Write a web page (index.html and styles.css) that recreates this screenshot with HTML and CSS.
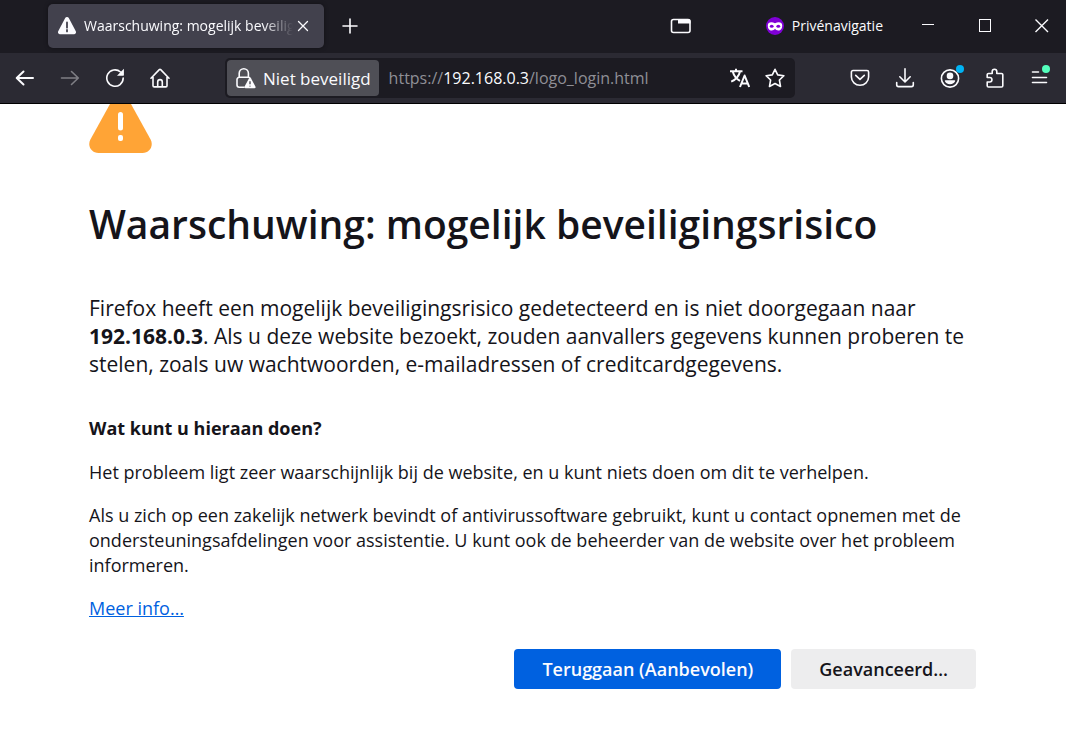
FILE: index.html
```html
<!DOCTYPE html>
<html lang="nl">
<head>
<meta charset="utf-8">
<title>Waarschuwing: mogelijk beveiligingsrisico</title>
<link rel="stylesheet" href="styles.css">
</head>
<body>
<header class="chrome">
  <div class="tabbar">
    <div class="tab">
      <svg class="icon" width="20" height="20" viewBox="0 0 20 20"><path d="M8.2 2.1a2 2 0 0 1 3.600 0l7 13.200a2 2 0 0 1-1.800 2.900H3a2 2 0 0 1-1.800-2.900z" fill="#fbfbfe"/><path d="M10 6.500v5.200M10 14v1.400" stroke="#42414d" stroke-width="1.800" stroke-linecap="round"/></svg>
      <span class="tab-title">Waarschuwing: mogelijk beveiligingsrisico</span>
      <button class="tab-close" aria-label="Tabblad sluiten"><svg class="icon" width="12" height="12" viewBox="0 0 12 12"><path d="M1.500 1.500l9 9M10.500 1.500l-9 9" class="line slim"/></svg></button>
    </div>
    <button class="new-tab" aria-label="Nieuw tabblad"><svg class="icon" width="16" height="16" viewBox="0 0 16 16"><path d="M8 1v14M1 8h14" class="line"/></svg></button>
    <button class="tool tab-view" aria-label="Vensters"><svg class="icon" width="22" height="16" viewBox="0 0 22 16"><rect x="1.500" y="1.500" width="18.500" height="13" rx="2" class="line"/><path d="M8 1h10.500a2 2 0 0 1 2 2v2.500H8z" fill="#fbfbfe"/></svg></button>
    <div class="private">
      <svg class="icon" width="18" height="18" viewBox="0 0 18 18"><circle cx="9" cy="9" r="9" fill="#8000d7"/><path d="M1.800 8.200c0-3 3.600-3.900 7.200-2 3.600-1.900 7.200-1 7.200 2 0 3.800-1.600 5.200-3.900 5.200-1.500 0-2.500-.7-3.300-1.700-.8 1-1.800 1.700-3.300 1.700-2.300 0-3.900-1.400-3.900-5.200z" fill="#fff"/><ellipse cx="5.700" cy="9.200" rx="1.900" ry="1.500" fill="#8000d7"/><ellipse cx="12.300" cy="9.200" rx="1.900" ry="1.500" fill="#8000d7"/></svg>
      <span>Privénavigatie</span>
    </div>
    <div class="window-controls">
      <button aria-label="Minimaliseren"><svg class="icon" width="14" height="14" viewBox="0 0 14 14"><path d="M1 5.500h12" class="thin"/></svg></button>
      <button aria-label="Maximaliseren"><svg class="icon" width="14" height="14" viewBox="0 0 14 14"><rect x="1.500" y=".5" width="11" height="12" class="thin"/></svg></button>
      <button aria-label="Sluiten"><svg class="icon" width="14" height="14" viewBox="0 0 14 14"><path d="M.5 .5l12.500 12.500M13 .5L.5 13" class="thin cross"/></svg></button>
    </div>
  </div>
  <nav class="toolbar">
    <div class="tools">
      <button class="tool" aria-label="Terug"><svg class="icon" width="20" height="20" viewBox="0 0 20 20"><path d="M18 10H2M8.500 3.500L1.700 10l6.800 6.500" class="line strong"/></svg></button>
      <button class="tool dim" aria-label="Vooruit"><svg class="icon" width="20" height="20" viewBox="0 0 20 20"><path d="M1.500 10h16M11.500 3.500l6.800 6.500-6.800 6.500" class="line"/></svg></button>
      <button class="tool" aria-label="Vernieuwen"><svg class="icon" width="20" height="20" viewBox="0 0 20 20"><path d="M15.500 4A8.200 8.200 0 1 0 18.200 10" class="line"/><path d="M18.900 .8v6.300a.6.600 0 0 1-.6.600H12z" fill="#fbfbfe"/></svg></button>
      <button class="tool" aria-label="Startpagina"><svg class="icon" width="20" height="20" viewBox="0 0 20 20"><path d="M1 10.200l8.300-8.600a1 1 0 0 1 1.400 0l8.300 8.600M3 9v8.700a1.200 1.200 0 0 0 1.200 1.200h11.600a1.200 1.200 0 0 0 1.200-1.200V9M7.700 18.500v-4.600a2.300 2.300 0 0 1 4.600 0v4.600" class="line"/></svg></button>
    </div>
    <div class="urlbar">
      <button class="identity">
        <svg class="icon" width="20" height="22" viewBox="0 0 20 22"><path d="M8 20.200H3.200a2.200 2.200 0 0 1-2.200-2.200v-5.500a2.200 2.200 0 0 1 2.200-2.200h9.200a2.200 2.200 0 0 1 2 1.500M3.200 10V6.300a4.600 4.600 0 0 1 9.200 0V10" class="line"/><path d="M12.900 11.600a1.200 1.200 0 0 1 2.200 0l4.300 7.900a1.200 1.200 0 0 1-1.100 1.700H9.700a1.200 1.200 0 0 1-1.100-1.700z" fill="#fbfbfe"/><path d="M14 14.300v3M14 18.800v.8" stroke="#4f4f56" stroke-width="1.400"/></svg>
        <span>Niet beveiligd</span>
      </button>
      <label class="address"><span>https://</span><input type="text" value="192.168.0.3" size="11" aria-label="Adres"><span>/logo_login.html</span></label>
      <button class="url-action" aria-label="Vertalen"><svg class="icon" width="20" height="20" viewBox="0 0 20 20"><path d="M0 3.300h12.500M6 .8v2.500M10 3.500C9 8 6 11.500 1.200 13.700M2.900 4C4 8 6.500 11 10 12.800" class="bold"/><path d="M10 19l4.600-11.500L19.200 19M11.500 15.500h6.200" class="bold"/></svg></button>
      <button class="url-action" aria-label="Bladwijzer"><svg class="icon" width="20" height="20" viewBox="0 0 20 20"><path d="M10 1.300l2.700 5.600 6.200.8-4.500 4.300 1.100 6.500-5.500-3-5.500 3 1.100-6.500L1.100 7.700l6.200-.8z" class="line"/></svg></button>
    </div>
    <div class="tools">
      <button class="tool" aria-label="Pocket"><svg class="icon" width="20" height="20" viewBox="0 0 20 20"><path d="M3 2.500h14a1.600 1.600 0 0 1 1.600 1.600V9A8.600 8.300 0 0 1 1.400 9V4.100A1.600 1.600 0 0 1 3 2.500zM5.700 7.300l4.300 4 4.300-4" class="line"/></svg></button>
      <button class="tool" aria-label="Downloads"><svg class="icon" width="20" height="20" viewBox="0 0 20 20"><path d="M10 .8v13M4.800 8.800l5.200 5.200 5.200-5.200M1.700 14.500v2.300a1.800 1.800 0 0 0 1.800 1.800h13a1.800 1.800 0 0 0 1.800-1.800v-2.300" class="line"/></svg></button>
      <button class="tool" aria-label="Account"><svg class="icon" width="20" height="20" viewBox="0 0 20 20"><circle cx="10" cy="10.500" r="8.600" class="line"/><circle cx="10" cy="7.900" r="3.300" fill="#fbfbfe"/><path d="M5.600 12.200h8.800a.8.800 0 0 1 .8.900c-.6 2-2.600 3.100-5.200 3.100s-4.600-1.100-5.200-3.100a.8.800 0 0 1 .8-.9z" fill="#fbfbfe"/></svg><span class="badge blue"></span></button>
      <button class="tool" aria-label="Extensies"><svg class="icon" width="20" height="20" viewBox="0 0 20 20"><path d="M2.200 9.500V6.800a1.300 1.300 0 0 1 1.300-1.300h3.700V3.600a2.300 2.300 0 0 1 4.600 0v1.900h4.700a1.300 1.300 0 0 1 1.300 1.300v10.900a1.300 1.300 0 0 1-1.300 1.300h-13a1.300 1.300 0 0 1-1.300-1.300v-3.700h2.500a2.200 2.200 0 0 0 0-4.500z" class="line"/></svg></button>
      <button class="tool" aria-label="Menu"><svg class="icon" width="20" height="20" viewBox="0 0 20 20"><path d="M2.500 4h6M2.500 9.500h14M2.500 14.500h14" class="line"/></svg><span class="badge green"></span></button>
    </div>
  </nav>
</header>
<main class="page">
  <svg class="warning" width="63" height="49" viewBox="0 0 63 49"><path d="M21 0 1.400 35.500C-2 42 2.500 49 9.500 49h44c7 0 11.500-7 8.100-13.500L42 0z" fill="#ffa436"/><path d="M31.500 10.500v13.500" stroke="#fff" stroke-width="5" stroke-linecap="round"/><rect x="29" y="31" width="5" height="6" rx="2" fill="#fff"/></svg>
  <h1>Waarschuwing: mogelijk beveiligingsrisico</h1>
  <p class="lead">Firefox heeft een mogelijk beveiligingsrisico gedetecteerd en is niet doorgegaan naar <b>192.168.0.3</b>. Als u deze website bezoekt, zouden aanvallers gegevens kunnen proberen te stelen, zoals uw wachtwoorden, e-mailadressen of creditcardgegevens.</p>
  <h2>Wat kunt u hieraan doen?</h2>
  <p>Het probleem ligt zeer waarschijnlijk bij de website, en u kunt niets doen om dit te verhelpen.</p>
  <p>Als u zich op een zakelijk netwerk bevindt of antivirussoftware gebruikt, kunt u contact opnemen met de ondersteuningsafdelingen voor assistentie. U kunt ook de beheerder van de website over het probleem informeren.</p>
  <p><a href="#info">Meer info…</a></p>
  <div class="actions">
    <button class="btn primary">Teruggaan (Aanbevolen)</button>
    <button class="btn">Geavanceerd…</button>
  </div>
</main>
</body>
</html>
```
FILE: styles.css
```css
* { box-sizing: border-box; }
body {
  margin: 0;
  background: #fff;
  color: #15141a;
  font-family: "Open Sans", "Noto Sans", sans-serif;
  font-size: 18px;
  line-height: 25px;
}
button, input { font: inherit; color: inherit; margin: 0; padding: 0; border: 0; background: none; }
button { display: flex; align-items: center; justify-content: center; }
.icon { display: block; flex: none; }
.line, .thin, .bold { fill: none; stroke: #fbfbfe; stroke-width: 1.6; stroke-linecap: round; stroke-linejoin: round; }
.strong { stroke-width: 2; }
.slim { stroke-width: 1.3; }
.thin { stroke-width: 1; stroke-linecap: butt; stroke-linejoin: miter; }
.cross { stroke-width: 1.4; }
.bold { stroke-width: 2; stroke-linecap: butt; }

.chrome { background: #2b2a33; color: #fbfbfe; border-bottom: 1px solid #000; }
.tabbar { display: flex; align-items: center; height: 53px; padding: 0 0 2px 48px; background: #1c1b22; font-size: 14px; line-height: 20px; }
.tab { display: flex; align-items: center; width: 276px; height: 44px; padding: 0 11px 0 9px; border-radius: 5px; background: #42414d; box-shadow: 0 0 4px #00000066; }
.tab-title { flex: 1; min-width: 0; margin-left: 7px; overflow: hidden; white-space: nowrap; mask-image: linear-gradient(to left, transparent, #000 30px); }
.tab-close { width: 20px; height: 20px; }
.new-tab { width: 44px; height: 40px; margin-left: 4px; }
.tab-view { margin-left: auto; }
.private { display: flex; align-items: center; gap: 8px; margin-left: 62px; }
.window-controls { display: flex; gap: 9px; margin-left: 21px; }
.window-controls button { width: 48px; height: 40px; }

.toolbar { display: flex; align-items: center; height: 50px; padding: 0 4px 0 2px; }
.tools { display: flex; }
.tool { position: relative; width: 45px; height: 40px; }
.dim { opacity: 0.4; }
.badge { position: absolute; top: 7px; right: 8px; width: 8px; height: 8px; border-radius: 50%; }
.blue { background: #00b3f4; }
.green { right: 12px; background: #54ffbd; }
.urlbar { display: flex; flex: 1; align-items: center; height: 40px; margin: 0 42px 0 43px; padding: 0 3px 0 2px; border-radius: 5px; background: #1c1b22; font-size: 17px; }
.identity { gap: 7px; height: 36px; padding: 0 8px 0 9px; border-radius: 4px; background: #4f4f56; white-space: nowrap; }
.address { display: flex; flex: 1; margin-left: 10px; color: #8f8f96; font-size: 16px; }
.address input { field-sizing: content; color: #fbfbfe; outline: 0; }
.url-action { width: 35px; height: 36px; }

.page { padding: 0 90px 63px 89px; }
.warning { display: block; }
h1 { margin: 44px 0 43px; font-size: 39px; line-height: 54px; font-weight: 600; }
.lead { margin: 0 0 38px; font-size: 21px; line-height: 28px; }
h2 { margin: 0 0 19px; font-size: 18px; line-height: 25px; font-weight: 700; }
p { margin: 0 0 18px; }
a { color: #0061e0; text-decoration: underline; }
.actions { display: flex; justify-content: flex-end; gap: 10px; margin-top: 28px; }
.btn { height: 40px; padding: 0 28px; border-radius: 4px; background: #ededee; font-weight: 600; }
.primary { background: #0061e0; color: #fbfbfe; }
```
